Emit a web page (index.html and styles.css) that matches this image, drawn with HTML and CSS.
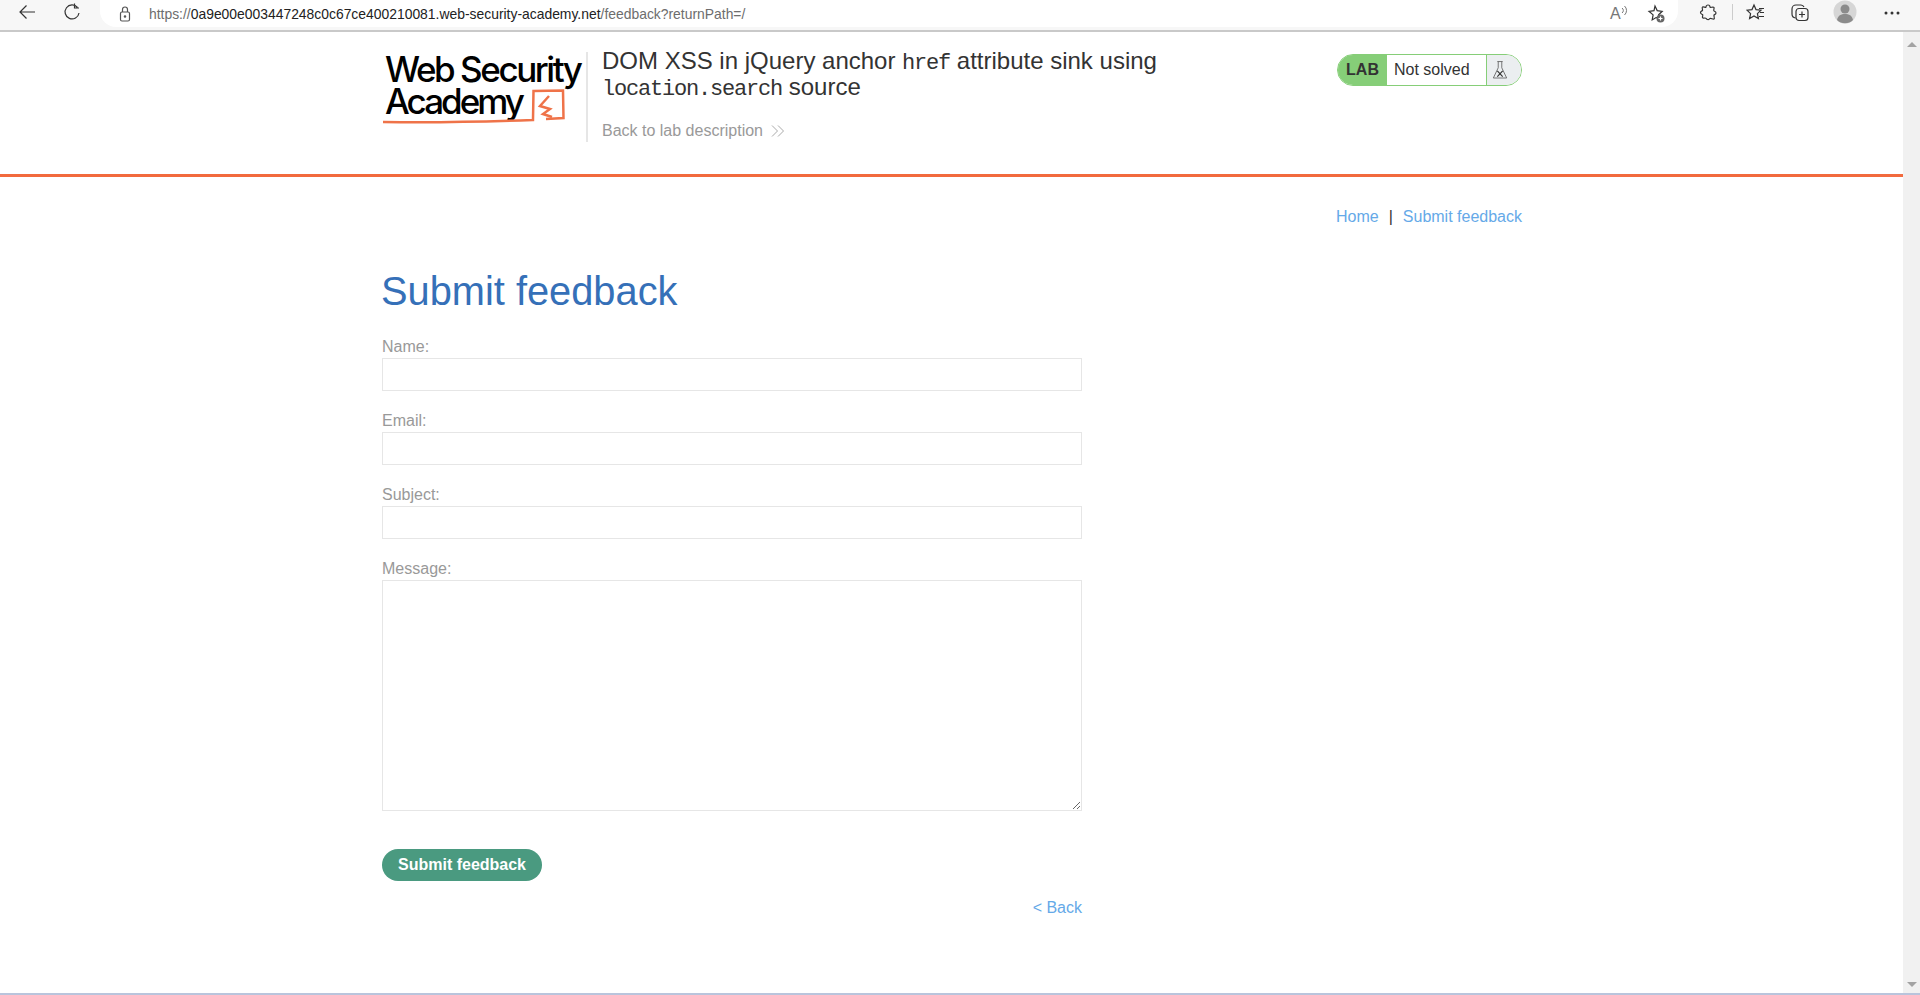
FILE: index.html
```html
<!DOCTYPE html>
<html lang="en">
<head>
  <meta charset="UTF-8">
  <title>Submit feedback</title>
  <link rel="stylesheet" href="styles.css">
</head>
<body>
  <div class="toolbar">
    <svg class="nav-icon back-icon" width="20" height="20" viewBox="0 0 20 20"><path d="M18 10H3M9.500 3.500 3 10l6.500 6.500" /></svg>
    <svg class="nav-icon reload-icon" width="20" height="20" viewBox="0 0 20 20"><path d="M15.500 5.500A7 7 0 1 0 17 11M12.500 1.500v4.500H17" /></svg>
    <div class="address">
      <svg class="lock" width="14" height="16" viewBox="0 0 14 16"><rect x="2.500" y="6" width="9" height="9" rx="1.500" /><path d="M4.500 6V3.500a2.500 2.500 0 0 1 5 0V6" /><circle cx="7" cy="10.500" r=".7" /></svg>
      <span class="url"><span class="url-dim">https://</span>0a9e00e003447248c0c67ce400210081.web-security-academy.net<span class="url-dim">/feedback?returnPath=/</span></span>
      <span class="read-aloud">A<svg width="9" height="12" viewBox="0 0 9 12"><path d="M1 8a3 3 0 0 0 0-5M3.500 10a6 6 0 0 0 0-9" /></svg></span>
      <svg class="tool-icon star-add" width="20" height="20" viewBox="0 0 20 20"><path d="M9 2l2.200 4.600 5 .7-3.600 3.500.5 3-3-.3-3.900 2.400.9-5L3 7.300l5-.7z" /><circle class="badge" cx="14.500" cy="14.500" r="4" /><path class="badge-plus" d="M14.500 12.500v4M12.500 14.500h4" /></svg>
    </div>
    <svg class="tool-icon ext" width="20" height="20" viewBox="0 0 20 20"><path d="M8 4a2 2 0 0 1 4 0c0 1 3.500-.5 4 .5s-1 3 0 3.500 2 .5 2 2-1.500 1.500-2 2 1 3.500 0 4-3-1-4-.5-1 1.500-2.500 1-1-1.500-2.500-1.500-2 .5-2.500-.5 1-2.500 0-3-2-.5-2-2 1.500-1.500 2-2-1-3 0-3.500S8 5 8 4z" /></svg>
    <span class="tool-sep"></span>
    <svg class="tool-icon fav" width="20" height="20" viewBox="0 0 20 20"><path d="M8 2l2 4.600 5 .6-3.600 3.400 1 5L8 13l-4.400 2.600 1-5L1 7.200l5-.6zM13 5.500h5M14 9.500h4M13 13.500h5" /></svg>
    <svg class="tool-icon coll" width="20" height="20" viewBox="0 0 20 20"><path d="M5.500 15A4 4 0 0 1 2 11V6a4 4 0 0 1 4-4h5a3.500 3.500 0 0 1 3 2" /><rect x="6" y="5.500" width="12" height="12" rx="3" /><path d="M12 8.500v6M9 11.500h6" /></svg>
    <svg class="avatar" width="24" height="24" viewBox="0 0 24 24"><circle class="avatar-bg" cx="12" cy="12" r="11.500" /><circle class="avatar-fg" cx="12" cy="9" r="4.500" /><path class="avatar-fg" d="M4 20c1-4.500 4-6 8-6s7 1.500 8 6a11.500 11.500 0 0 1-16 0z" /></svg>
    <svg class="more" width="16" height="4" viewBox="0 0 16 4"><circle cx="2" cy="2" r="1.500" /><circle cx="8" cy="2" r="1.500" /><circle cx="14" cy="2" r="1.500" /></svg>
  </div>

  <div class="window">
    <div class="page">
      <header class="lab-header">
        <div class="lab-header-inner">
          <svg class="logo" width="204" height="88" viewBox="0 -8 204 88">
            <text class="logo-text" x="3" y="30" textLength="198" lengthAdjust="spacing">Web Security</text>
            <text class="logo-text" x="3" y="62" textLength="140" lengthAdjust="spacing">Academy</text>
            <path class="logo-line" d="M1 70 Q70 71 151 68 L151.500 39 L181 38.500 L181.500 66 L164 67" />
            <path class="logo-bolt" d="M167 44 L158 54 L168 57 L161 62 L170 65" />
          </svg>
          <div class="lab-title-block">
            <h2 class="lab-title">DOM XSS in jQuery anchor <code>href</code> attribute sink using<br><code>location.search</code> source</h2>
            <a class="back-lab" href="#">Back to lab description
              <svg width="14" height="14" viewBox="0 0 14 14"><path d="M1 1.500 6.500 7 1 12.500M7 1.500 12.500 7 7 12.500" /></svg>
            </a>
          </div>
          <div class="lab-status">
            <span class="lab-tag">LAB</span>
            <span class="lab-state">Not solved</span>
            <span class="lab-flask">
              <svg width="16" height="20" viewBox="0 0 18 22"><path d="M6 1.500h6M7 1.500v7L1.500 20h15L11 8.500v-7" /><path class="flask-x" d="M6 12l6 6.500M12 12l-6 6.500" /></svg>
            </span>
          </div>
        </div>
      </header>

      <main class="content">
        <nav class="top-links">
          <a href="#">Home</a><span class="pipe">|</span><a href="#">Submit feedback</a>
        </nav>
        <h1>Submit feedback</h1>
        <form class="feedback-form">
          <label for="name">Name:</label>
          <input type="text" id="name">
          <label for="email">Email:</label>
          <input type="text" id="email">
          <label for="subject">Subject:</label>
          <input type="text" id="subject">
          <label for="message">Message:</label>
          <textarea id="message"></textarea>
          <button type="button">Submit feedback</button>
          <a class="back-link" href="#">&lt; Back</a>
        </form>
      </main>
    </div>
    <div class="scrollbar">
      <span class="arrow-up"></span>
      <span class="arrow-down"></span>
    </div>
  </div>
  <div class="status-line"></div>
</body>
</html>
```

FILE: styles.css
```css
:root {
  --link: #65a9e8;
  --heading: #3570b8;
  --grey: #999;
  --orange: #f26a3d;
  --green: #86ce78;
  --border: #e6e6e6;
}
* { box-sizing: border-box; }
body {
  margin: 0;
  height: 100vh;
  overflow: hidden;
  display: flex;
  flex-direction: column;
  background: #fff;
  font-family: "Liberation Sans", Arial, sans-serif;
  font-size: 16px;
  color: #333;
}
a { color: var(--link); text-decoration: none; }

/* browser chrome */
.toolbar {
  flex: none;
  height: 32px;
  display: flex;
  align-items: flex-start;
  background: #f7f7f7;
  border-bottom: 2px solid #c9c9c9;
}
.toolbar svg { flex: none; fill: none; stroke: #333; stroke-width: 1.2; }
.nav-icon { margin-top: 2px; }
.back-icon { margin-left: 17px; }
.reload-icon { margin-left: 25px; }
.address {
  flex: none;
  width: 1578px;
  height: 27px;
  margin-left: 18px;
  padding-left: 18px;
  display: flex;
  align-items: center;
  background: #fff;
  border-radius: 0 0 16px 16px;
}
.toolbar .lock { stroke: #555; }
.url {
  margin-left: 17px;
  width: 1461px;
  font-size: 13.9px;
  color: #222;
}
.url-dim { color: #6d6d6d; }
.read-aloud {
  display: flex;
  font-size: 16px;
  color: #777;
  width: 36px;
}
.toolbar .read-aloud svg { stroke: #777; stroke-width: 1; }
.tool-icon { margin-top: 3px; }
.address .tool-icon { margin-top: 0; }
.toolbar .badge { fill: #666; stroke: none; }
.toolbar .badge-plus { stroke: #fff; }
.ext { margin-left: 20px; }
.tool-sep {
  width: 1px;
  height: 16px;
  margin: 4px 0 0 14px;
  background: #ccc;
}
.fav { margin-left: 13px; }
.coll { margin-left: 24px; }
.toolbar .avatar { margin: 0 0 0 23px; stroke: none; }
.toolbar .avatar-bg { fill: #d6d6d6; stroke: none; }
.toolbar .avatar-fg { fill: #8b8b8b; stroke: none; }
.toolbar .more { margin: 11px 0 0 27px; fill: #333; stroke: none; }

/* page */
.window {
  flex: 1;
  min-height: 0;
  display: flex;
}
.page { flex: 1; min-width: 0; }
.scrollbar {
  flex: none;
  width: 17px;
  padding: 10px 0 6px;
  display: flex;
  flex-direction: column;
  justify-content: space-between;
  align-items: center;
  background: #f1f1f1;
}
.arrow-up, .arrow-down {
  width: 0;
  height: 0;
  border-left: 5px solid transparent;
  border-right: 5px solid transparent;
}
.arrow-up { border-bottom: 5px solid #a3a3a3; }
.arrow-down { border-top: 5px solid #a3a3a3; }
.status-line {
  flex: none;
  height: 2px;
  background: #b9c4dc;
}

/* lab header */
.lab-header {
  height: 145px;
  border-bottom: 3px solid var(--orange);
}
.lab-header-inner {
  width: 1140px;
  margin-left: 382px;
  padding-top: 20px;
  display: flex;
  align-items: flex-start;
}
.logo { flex: none; margin-top: -8px; margin-bottom: -8px; }
.logo-text {
  font-family: Inter, "Liberation Sans", sans-serif;
  font-size: 35px;
  font-weight: 500;
  fill: #000;
}
.logo-line, .logo-bolt {
  fill: none;
  stroke: #ef7349;
  stroke-width: 2.500;
}
.lab-title-block {
  width: 735px;
  height: 90px;
  padding-left: 14px;
  border-left: 2px solid var(--border);
}
.lab-title {
  margin: -4px 0 0;
  font-size: 24px;
  font-weight: 400;
  line-height: 25px;
  color: #333;
}
.lab-title code {
  font-family: "Liberation Mono", monospace;
  font-size: 22px;
  letter-spacing: -1.2px;
  font-weight: 400;
  line-height: 20px;
}
.back-lab {
  display: flex;
  align-items: center;
  gap: 8px;
  margin-top: 22px;
  color: var(--grey);
}
.back-lab svg { fill: none; stroke: #aaa; stroke-width: 1; }
.lab-status {
  display: flex;
  width: 185px;
  height: 32px;
  margin: 2px 0 0 16px;
  border: 1px solid var(--green);
  border-radius: 16px;
  overflow: hidden;
}
.lab-tag {
  width: 49px;
  line-height: 30px;
  text-align: center;
  font-weight: 700;
  background: var(--green);
}
.lab-state {
  width: 99px;
  padding-left: 7px;
  line-height: 30px;
}
.lab-flask {
  flex: 1;
  display: flex;
  align-items: center;
  padding-left: 5px;
  background: #ebeef0;
  border-left: 1px solid var(--green);
}
.lab-flask svg { fill: none; stroke: #666; stroke-width: 1; }
.lab-flask .flask-x { stroke: #333; stroke-width: 1.3; }

/* content */
.content {
  width: 1140px;
  margin-left: 382px;
}
.top-links {
  margin-top: 30px;
  line-height: 20px;
  text-align: right;
}
.pipe { margin: 0 10px; color: #333; }
h1 {
  margin: 39px 0 0 -1px;
  font-size: 39.8px;
  font-weight: 400;
  line-height: 50px;
  color: var(--heading);
}
.feedback-form {
  width: 700px;
  margin-top: 21px;
  display: flex;
  flex-direction: column;
  align-items: flex-start;
}
label {
  line-height: 19px;
  margin-bottom: 2px;
  color: var(--grey);
}
input, textarea {
  width: 100%;
  border: 1px solid var(--border);
  background: #fff;
  display: block;
}
input {
  height: 33px;
  margin-bottom: 20px;
}
textarea { height: 231px; }
button {
  width: 160px;
  height: 32px;
  margin-top: 38px;
  border: none;
  border-radius: 16px;
  background: #4a9a80;
  color: #fff;
  font: 700 16px "Liberation Sans", Arial, sans-serif;
}
.back-link {
  align-self: flex-end;
  margin-top: 17px;
  line-height: 20px;
}
```
